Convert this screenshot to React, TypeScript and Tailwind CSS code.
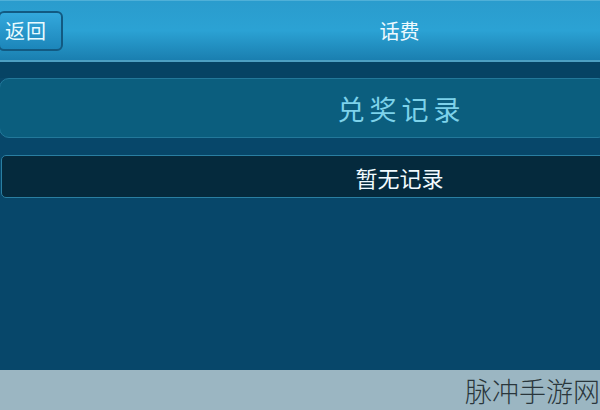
import type React from "react"

const cjk = { fontFamily: '"Noto Sans CJK SC", "Noto Sans", sans-serif' } as React.CSSProperties

export default function App() {
  return (
    <div className="w-[600px] h-[410px] flex flex-col bg-[#07476a] overflow-hidden" style={cjk}>
      {/* top bar */}
      <div className="h-[62px] shrink-0 flex items-center relative bg-gradient-to-b from-[#2a9ccd] via-[#2ba2d4] to-[#1a7fb0] border-t border-[#4fb0d8] border-b-2 border-b-[#4d9fc2]">
        <button className="ml-[-2px] w-[65px] h-[40px] rounded-md border-2 border-[#125a82] bg-gradient-to-b from-[#33a8dc] to-[#1c86ba] text-[20px] text-[#e8fbff] leading-none flex items-center pl-[5px] tracking-[1px]">
          返回
        </button>
        <div className="flex-1 flex justify-center pr-[2px] pl-[138px] text-[20px] text-[#eefaff] leading-none">话费</div>
      </div>
      <div className="h-[16px] shrink-0 bg-[#064364]" />

      {/* records */}
      <div className="flex flex-col gap-[17px] flex-1">
        <div className="h-[60px] ml-[-1px] mr-[-8px] rounded-[10px] border border-[#23789a] bg-[#0b5e7e] flex items-center justify-center pl-[196px] text-[27px] tracking-[5px] text-[#7dd2ea] leading-none">
          兑奖记录
        </div>
        <div className="h-[43px] ml-[1px] mr-[-8px] rounded-[5px] border border-[#2a7fa2] bg-[#052a3d] flex items-center justify-center pl-[190px] text-[22px] text-[#f2fbff] leading-none">
          暂无记录
        </div>
      </div>

      {/* footer strip */}
      <div className="h-[40px] shrink-0 bg-[#9bb6c2] flex items-center justify-end">
        <span className="text-[27px] font-light text-[#2a363c] leading-none">脉冲手游网</span>
      </div>
    </div>
  )
}
